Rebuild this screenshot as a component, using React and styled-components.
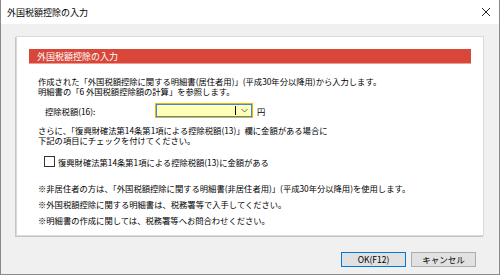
import React from 'react';
import styled, { createGlobalStyle } from 'styled-components';

const GlobalStyle = createGlobalStyle`
  html, body {
    margin: 0;
    padding: 0;
    background: #ffffff;
  }
  body {
    font-family: "Noto Sans CJK JP", "Noto Sans", sans-serif;
    color: #000;
  }
`;

// window frame
const Window = styled.div`
  width: 500px;
  height: 275px;
  box-sizing: border-box;
  border: 1px solid #8a8a8a;
  border-top: none;
  display: flex;
  flex-direction: column;
  background: #f0f0f0;
`;

const TitleBar = styled.div`
  height: 24px;
  flex: none;
  background: #ffffff;
  display: flex;
  align-items: center;
  justify-content: space-between;
  padding: 0 8px 0 6px;
  font-size: 9px;
`;

const CloseIcon = styled.svg`
  width: 10px;
  height: 10px;
`;

const Body = styled.div`
  flex: 1;
  display: flex;
  flex-direction: column;
  padding: 12px 15px 0 15px;
`;

const Panel = styled.div`
  height: 200px;
  box-sizing: border-box;
  background: #ffffff;
  border: 1px solid #dadada;
  box-shadow: -1px 1px 0 #c4c4c4;
  padding: 12px 12px 0 12px;
  font-size: 8.3px;
  line-height: 10px;
`;

const Heading = styled.div`
  height: 15px;
  background: #d8473a;
  border-bottom: 1px solid #ef9c93;
  box-sizing: border-box;
  color: #ffffff;
  font-size: 9px;
  line-height: 15px;
  padding-left: 8px;
`;

const Content = styled.div`
  padding-left: 9px;
`;

const Paragraph = styled.p`
  margin: ${p => p.$top || 0}px 0 0 0;
  white-space: nowrap;
`;

const FieldRow = styled.div`
  display: flex;
  align-items: center;
  margin-top: 7px;
  padding-left: 7px;
`;

const FieldLabel = styled.span`
  width: 110px;
`;

const Combo = styled.div`
  width: 98px;
  height: 15px;
  box-sizing: border-box;
  border: 1px solid #f2b700;
  box-shadow: inset 0 0 0 1px #3e8ad6;
  background: #ffffb8;
  display: flex;
  align-items: center;
  justify-content: flex-end;
`;

const Caret = styled.span`
  width: 1px;
  height: 9px;
  background: #000;
  margin-right: 5px;
`;

const Chevron = styled.svg`
  width: 7px;
  height: 5px;
  margin-right: 4px;
`;

const Yen = styled.span`
  margin-left: 4px;
`;

const CheckRow = styled.label`
  display: flex;
  align-items: center;
  gap: 3px;
  margin-top: 11px;
  padding-left: 6px;
`;

const Box = styled.span`
  width: 9px;
  height: 9px;
  border: 1px solid #333;
  background: #fff;
  flex: none;
`;

const Notes = styled.div`
  margin-top: 16px;
  display: flex;
  flex-direction: column;
  gap: 6px;
`;

const Footer = styled.div`
  flex: 1;
  display: flex;
  justify-content: flex-end;
  align-items: center;
  gap: 5px;
  padding-right: 8px;
  padding-top: 8px;
`;

const Button = styled.button`
  width: 65px;
  height: 15px;
  box-sizing: border-box;
  padding: 0;
  font-family: "Noto Sans CJK JP", "Noto Sans", sans-serif;
  font-size: 8.5px;
  line-height: 13px;
  color: #000;
  background: #e1e1e1;
  border: 1px solid ${p => (p.$focused ? '#0078d7' : '#adadad')};
`;

export default function App() {
  return (
    <>
      <GlobalStyle />
      <Window>
        <TitleBar>
          <span>外国税額控除の入力</span>
          <CloseIcon viewBox="0 0 10 10">
            <path d="M1 1 L9 9 M9 1 L1 9" stroke="#222" strokeWidth="1" />
          </CloseIcon>
        </TitleBar>
        <Body>
          <Panel>
            <Heading>外国税額控除の入力</Heading>
            <Content>
              <Paragraph $top={12}>
                作成された「外国税額控除に関する明細書(居住者用)」(平成30年分以降用)から入力します。
              </Paragraph>
              <Paragraph>明細書の「6 外国税額控除額の計算」を参照します。</Paragraph>
              <FieldRow>
                <FieldLabel>控除税額(16):</FieldLabel>
                <Combo>
                  <Caret />
                  <Chevron viewBox="0 0 7 5">
                    <path d="M0.5 1 L3.5 4 L6.5 1" stroke="#555" fill="none" strokeWidth="0.9" />
                  </Chevron>
                </Combo>
                <Yen>円</Yen>
              </FieldRow>
              <Paragraph $top={7}>
                さらに、「復興財確法第14条第1項による控除税額(13)」欄に金額がある場合に
              </Paragraph>
              <Paragraph>下記の項目にチェックを付けてください。</Paragraph>
              <CheckRow>
                <Box />
                <span>復興財確法第14条第1項による控除税額(13)に金額がある</span>
              </CheckRow>
              <Notes>
                <span>※非居住者の方は、「外国税額控除に関する明細書(非居住者用)」(平成30年分以降用)を使用します。</span>
                <span>※外国税額控除に関する明細書は、税務署等で入手してください。</span>
                <span>※明細書の作成に関しては、税務署等へお問合わせください。</span>
              </Notes>
            </Content>
          </Panel>
          <Footer>
            <Button $focused>OK(F12)</Button>
            <Button>キャンセル</Button>
          </Footer>
        </Body>
      </Window>
    </>
  );
}
